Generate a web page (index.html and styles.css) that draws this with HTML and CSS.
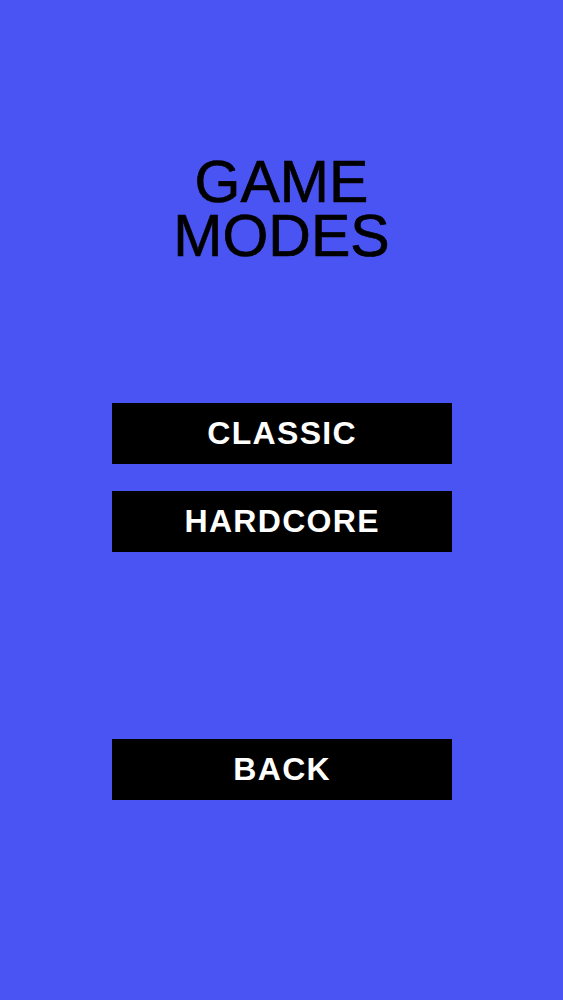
FILE: index.html
```html
<!DOCTYPE html>
<html lang="en">
<head>
<meta charset="utf-8">
<title>Game Modes</title>
<link rel="stylesheet" href="styles.css">
</head>
<body>
<main class="screen">
  <h1 class="title"><span class="line">GAME</span><span class="line">MODES</span></h1>
  <div class="modes">
    <button class="btn">CLASSIC</button>
    <button class="btn">HARDCORE</button>
  </div>
  <button class="btn back">BACK</button>
</main>
</body>
</html>
```

FILE: styles.css
```css
html, body {
  margin: 0;
  padding: 0;
  background: #4a54f2;
}
.screen {
  display: flex;
  flex-direction: column;
  align-items: center;
  height: 1000px;
  padding-top: 155px;
  box-sizing: border-box;
  font-family: "Liberation Sans", Arial, sans-serif;
}
.title {
  margin: 0;
  display: flex;
  flex-direction: column;
  align-items: center;
  font-size: 59px;
  font-weight: 400;
  color: #000;
  -webkit-text-stroke: 0.7px #000;
}
.line {
  display: block;
  height: 54px;
  line-height: 54px;
}
.modes {
  display: flex;
  flex-direction: column;
  gap: 27px;
  margin-top: 140px;
}
.btn {
  width: 340px;
  height: 61px;
  margin: 0;
  padding: 0 0 0 1.3px;
  border: none;
  background: #000;
  color: #fff;
  font-family: "Liberation Sans", Arial, sans-serif;
  font-size: 32px;
  font-weight: 700;
  letter-spacing: 1.3px;
  display: flex;
  align-items: center;
  justify-content: center;
}
.back {
  margin-top: 187px;
}
```
